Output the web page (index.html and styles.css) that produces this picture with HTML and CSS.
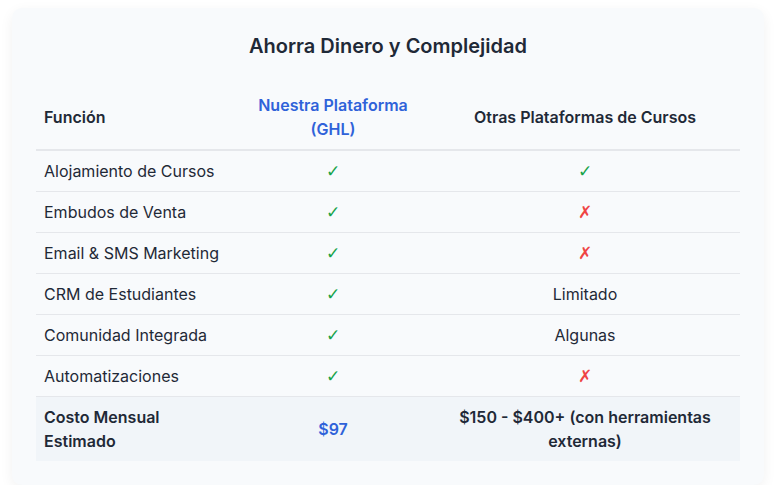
FILE: index.html
```html
<!DOCTYPE html>
<html lang="es">
<head>
<meta charset="utf-8">
<link rel="stylesheet" href="styles.css">
</head>
<body>
<div class="card">
  <h2 class="title">Ahorra Dinero y Complejidad</h2>
  <table class="cmp">
    <colgroup>
      <col class="c1"><col class="c2"><col class="c3">
    </colgroup>
    <thead>
      <tr>
        <th class="left">Función</th>
        <th class="ours">Nuestra Plataforma (GHL)</th>
        <th>Otras Plataformas de Cursos</th>
      </tr>
    </thead>
    <tbody>
      <tr><td class="left">Alojamiento de Cursos</td><td><span class="yes">✓</span></td><td><span class="yes">✓</span></td></tr>
      <tr><td class="left">Embudos de Venta</td><td><span class="yes">✓</span></td><td><span class="no">✗</span></td></tr>
      <tr><td class="left">Email &amp; SMS Marketing</td><td><span class="yes">✓</span></td><td><span class="no">✗</span></td></tr>
      <tr><td class="left">CRM de Estudiantes</td><td><span class="yes">✓</span></td><td>Limitado</td></tr>
      <tr><td class="left">Comunidad Integrada</td><td><span class="yes">✓</span></td><td>Algunas</td></tr>
      <tr><td class="left">Automatizaciones</td><td><span class="yes">✓</span></td><td><span class="no">✗</span></td></tr>
      <tr class="total"><td class="left strong">Costo Mensual Estimado</td><td class="price">$97</td><td class="strong">$150 - $400+ (con herramientas externas)</td></tr>
    </tbody>
  </table>
</div>
</body>
</html>
```

FILE: styles.css
```css
html, body {
  margin: 0;
  padding: 0;
  background: #ffffff;
}
body {
  font-family: Inter, "Noto Sans", sans-serif;
  color: #1f2937;
  padding: 8px 18px 0 12px;
}
.card {
  background: #f8fafc;
  border-radius: 10px;
  box-shadow: 0 4px 14px rgba(15, 23, 42, 0.06);
  padding: 24px;
}
.title {
  margin: 0 0 25px;
  text-align: center;
  font-size: 20px;
  line-height: 28px;
  font-weight: 600;
  color: #1f2937;
}
.cmp {
  width: 100%;
  border-collapse: collapse;
  font-size: 16px;
  line-height: 24px;
}
.c1 { width: 200px; }
.c2 { width: 194px; }
.c3 { width: 310px; }
.cmp th {
  font-weight: 600;
  padding: 8px;
  text-align: center;
  border-bottom: 2px solid #e5e7eb;
  color: #1f2937;
}
.cmp th.ours {
  color: #2f62d9;
}
.cmp td {
  padding: 8px;
  text-align: center;
  border-bottom: 1px solid #e5e7eb;
  color: #1f2937;
}
.cmp .left { text-align: left; }
.yes, .no {
  font-family: "DejaVu Sans", sans-serif;
  font-size: 17px;
}
.yes { color: #16a34a; }
.no { color: #ef4444; }
.total td {
  background: #f1f5f9;
  border-bottom: none;
  padding: 8px;
}
.strong { font-weight: 600; }
.total .price {
  color: #2f62d9;
  font-weight: 600;
}
.total td.strong:last-child {
  padding: 8px 24px;
}
```
